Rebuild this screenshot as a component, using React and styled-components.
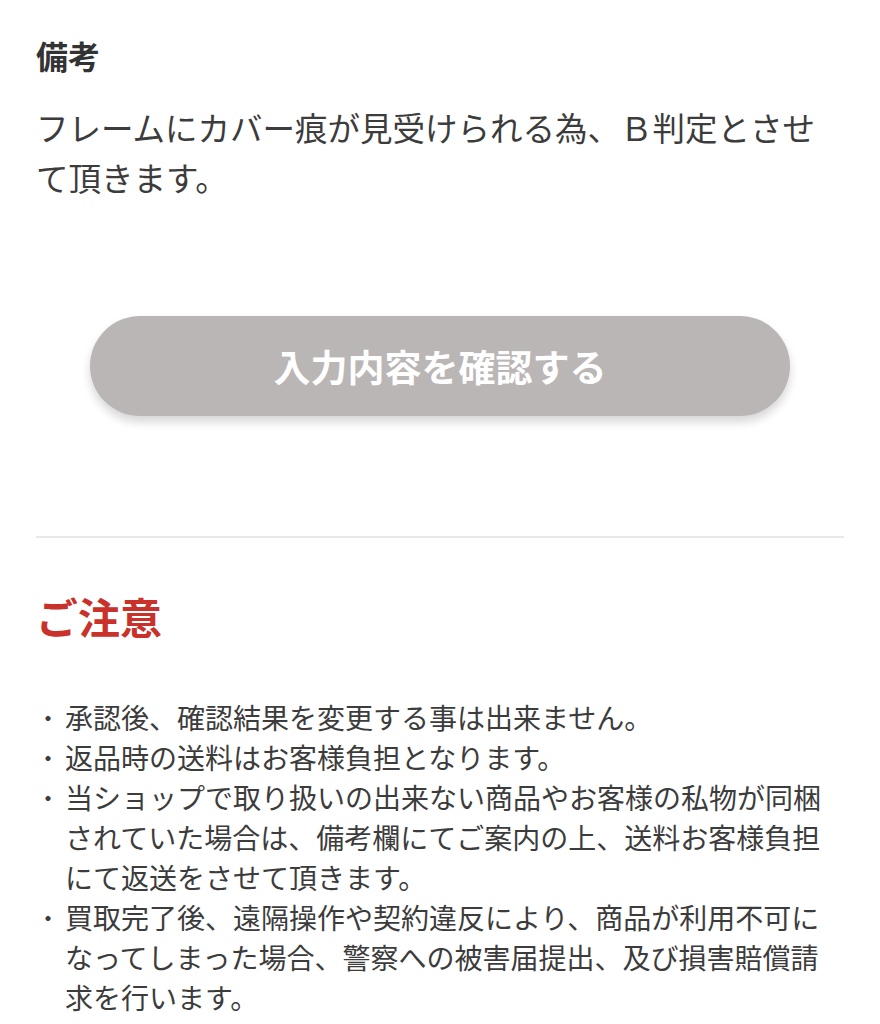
import React from 'react'
import styled, {createGlobalStyle} from 'styled-components';

const GlobalStyle = createGlobalStyle`
  html, body {
    margin: 0;
    padding: 0;
    background: #fff;
  }
  body {
    font-family: "Noto Sans CJK JP", "Noto Sans", sans-serif;
    color: #333;
  }
`

const Page = styled.div`
  width: 100%;
  box-sizing: border-box;
  padding: 33px 36px 0;
`
const Section = styled.section`
  display: flex;
  flex-direction: column;
`
const Label = styled.h3`
  margin: 0;
  font-size: 32px;
  font-weight: 700;
  line-height: 1.4;
  color: #333;
`
const Remark = styled.p`
  margin: 24px 0 0;
  font-size: 32.5px;
  line-height: 50px;
  color: #3c3c3c;
`
const ButtonRow = styled.div`
  display: flex;
  justify-content: center;
  margin-top: 114px;
`
const ConfirmButton = styled.button`
  width: 700px;
  height: 100px;
  border: none;
  border-radius: 50px;
  background-color: #bbb6b6;
  color: #fff;
  font-family: inherit;
  font-size: 37px;
  font-weight: 700;
  box-shadow: 0 6px 10px rgba(0, 0, 0, 0.16);
  cursor: pointer;
`
const Divider = styled.hr`
  margin: 120px 0 0;
  border: none;
  height: 2px;
  background: #e8e8e8;
`
const Notice = styled.h2`
  margin: 49px 0 0;
  font-size: 42px;
  font-weight: 700;
  line-height: 1.4;
  color: #c8322a;
`
const List = styled.ul`
  list-style: none;
  margin: 51px 0 0;
  padding: 0;
`
const Item = styled.li`
  display: flex;
  font-size: 28px;
  line-height: 40px;
  color: #3c3c3c;
  &::before {
    content: "・";
    flex: 0 0 29px;
    width: 29px;
    font-size: 24px;
  }
`

const notes = [
  '承認後、確認結果を変更する事は出来ません。',
  '返品時の送料はお客様負担となります。',
  '当ショップで取り扱いの出来ない商品やお客様の私物が同梱されていた場合は、備考欄にてご案内の上、送料お客様負担にて返送をさせて頂きます。',
  '買取完了後、遠隔操作や契約違反により、商品が利用不可になってしまった場合、警察への被害届提出、及び損害賠償請求を行います。',
]

function App() {
  return (
    <Page>
      <GlobalStyle />
      <Section>
        <Label>備考</Label>
        <Remark>フレームにカバー痕が見受けられる為、Ｂ判定とさせて頂きます。</Remark>
      </Section>
      <ButtonRow>
        <ConfirmButton type="button">入力内容を確認する</ConfirmButton>
      </ButtonRow>
      <Divider />
      <Notice>ご注意</Notice>
      <List>
        {notes.map((n) => <Item key={n}>{n}</Item>)}
      </List>
    </Page>
  )
}

export default App
